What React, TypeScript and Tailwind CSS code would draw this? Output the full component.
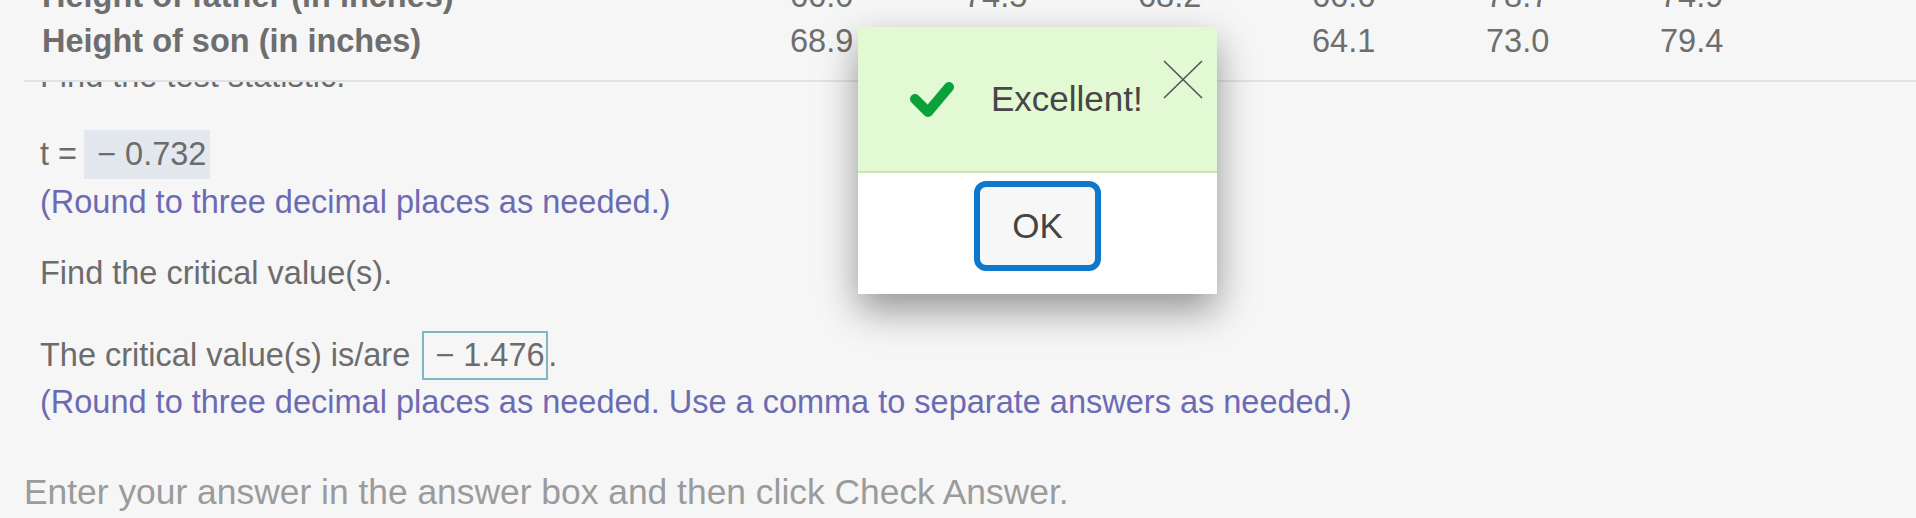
const father = ["66.0", "74.5", "68.2", "66.6", "78.7", "74.9"];
const son = ["68.9", "70.8", "71.4", "64.1", "73.0", "79.4"];

function TableRow({ label, values }: { label: string; values: string[] }) {
  return (
    <div className="grid h-[45px] grid-cols-[748px_repeat(6,174px)] leading-[45px]">
      <span className="font-bold">{label}</span>
      {values.map((v, i) => (
        <span key={i}>{v}</span>
      ))}
    </div>
  );
}

function AnswerBox({ value, bordered }: { value: string; bordered?: boolean }) {
  return (
    <span
      className={
        bordered
          ? "flex h-[49px] w-[126px] items-center border-2 border-[#7db6c6] pl-[11px]"
          : "flex h-[49px] w-[126px] items-center bg-[#e3e8ee] pl-[13px]"
      }
    >
      {value}
    </span>
  );
}

function FeedbackDialog() {
  return (
    <div className="absolute left-[858px] top-[27px] flex h-[267px] w-[359px] flex-col bg-white shadow-[0_16px_36px_rgba(0,0,0,0.4)]">
      <div className="relative flex h-[146px] items-center border-b-2 border-[#c8e6b3] bg-[#e2f9d3] pl-[51px]">
        <svg width="46" height="37" viewBox="0 0 46 37" fill="none">
          <path
            d="M6 18 L19 31 L40 6"
            stroke="#08a13b"
            strokeWidth="10"
            strokeLinecap="round"
            strokeLinejoin="round"
          />
        </svg>
        <span className="ml-[36px] text-[35px] text-[#464646]">Excellent!</span>
        <svg
          className="absolute right-[14px] top-[33px]"
          width="40"
          height="39"
          viewBox="0 0 40 39"
          fill="none"
        >
          <path d="M1 1 L39 38 M39 1 L1 38" stroke="#555" strokeWidth="1.6" />
        </svg>
      </div>
      <div className="flex justify-center pt-[8px]">
        <button className="h-[90px] w-[127px] rounded-[12px] border-[6px] border-[#0d78cc] bg-[#f7f7f7] text-[35px] text-[#444]">
          OK
        </button>
      </div>
    </div>
  );
}

export default function App() {
  return (
    <div className="relative flex h-[518px] w-[1916px] flex-col overflow-hidden bg-[#f6f6f6] pl-[24px] font-['Liberation_Sans',Arial,sans-serif] text-[32.5px] text-[#6c6c6c]">
      <div className="-mt-[26px] border-b-2 border-[#dfe3e8] pb-[16px] pl-[18px] text-[#6e6e6e]">
        <TableRow label="Height of father (in inches)" values={father} />
        <TableRow label="Height of son (in inches)" values={son} />
      </div>

      <div className="pl-[16px]">
        <div className="h-[8px] overflow-hidden">
          <p className="-mt-[22px] leading-none">Find the test statistic.</p>
        </div>

        <div className="mt-[40px] flex h-[49px] items-center">
          <span>t =</span>
          <span className="ml-[7px]">
            <AnswerBox value="− 0.732" />
          </span>
        </div>
        <p className="mt-[3px] leading-[40px] text-[#6b6bb4]">
          (Round to three decimal places as needed.)
        </p>

        <p className="mt-[31px] leading-[40px]">Find the critical value(s).</p>

        <div className="mt-[38px] flex h-[49px] items-center">
          <span>The critical value(s) is/are</span>
          <span className="ml-[12px]">
            <AnswerBox value="− 1.476" bordered />
          </span>
          <span>.</span>
        </div>
        <p className="mt-[2px] leading-[40px] text-[#6b6bb4]">
          (Round to three decimal places as needed. Use a comma to separate answers as needed.)
        </p>
      </div>

      <p className="mt-[50px] text-[35.4px] leading-[40px] text-[#9b9b9b]">
        Enter your answer in the answer box and then click Check Answer.
      </p>

      <FeedbackDialog />
    </div>
  );
}
